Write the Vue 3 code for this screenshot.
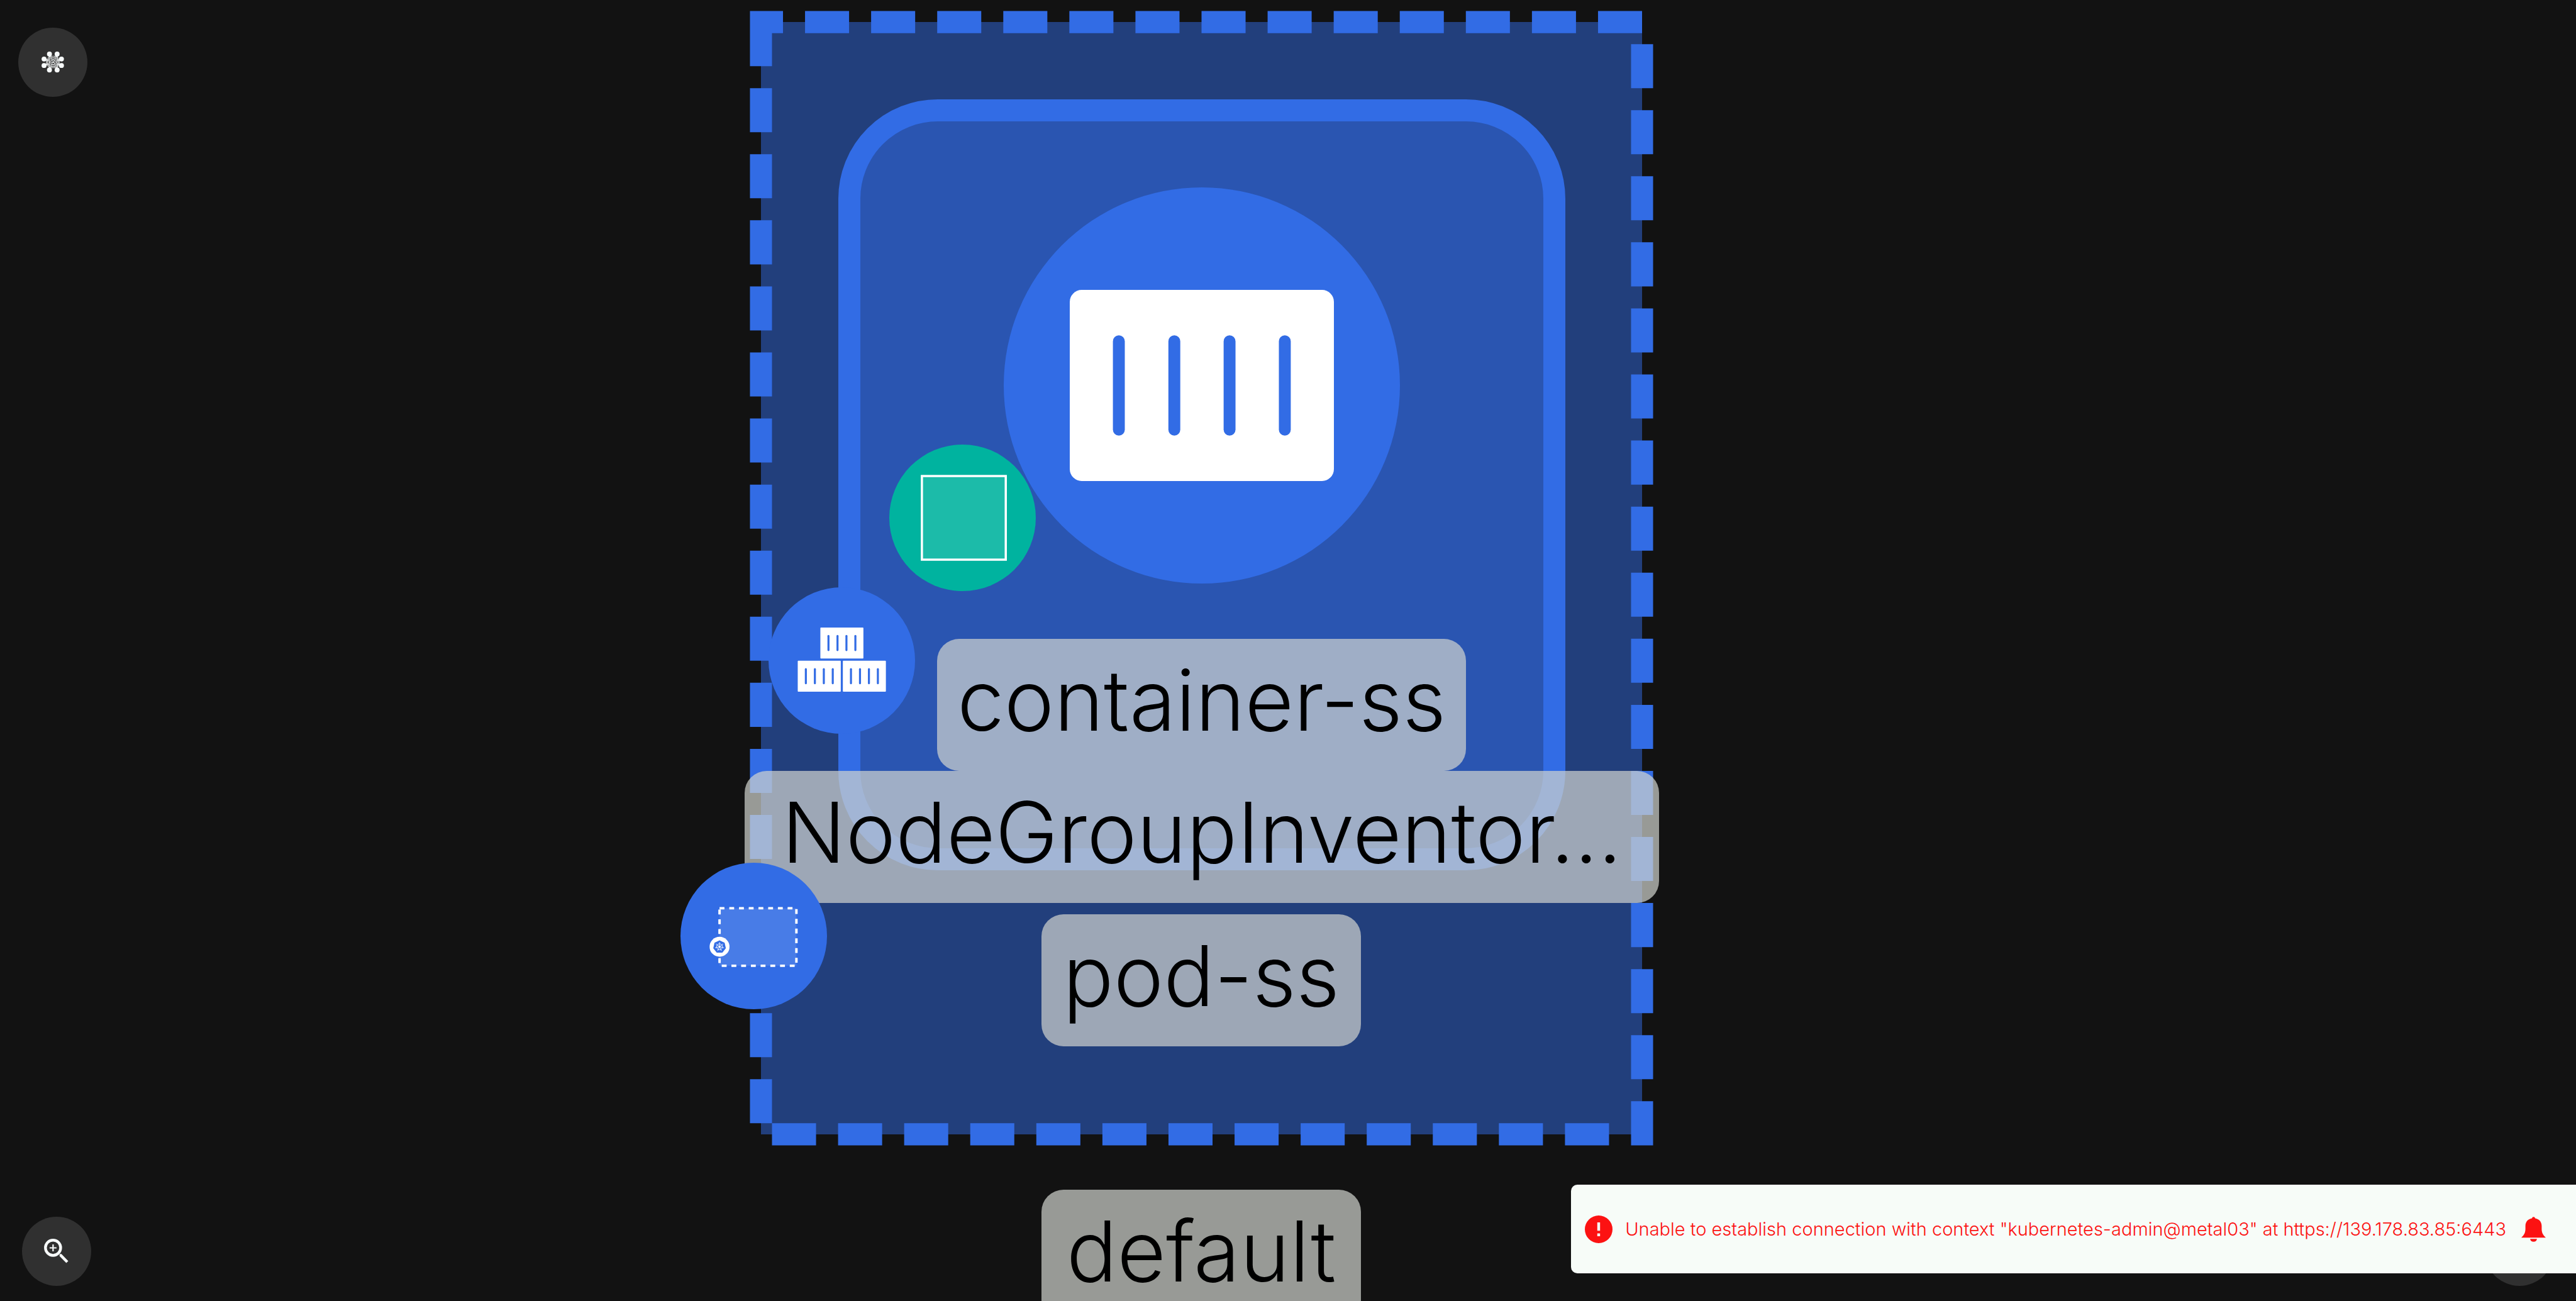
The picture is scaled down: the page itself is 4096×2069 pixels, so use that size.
<script setup>
const labels = [
  { id: 'container', text: 'container-ss' },
  { id: 'group', text: 'NodeGroupInventor...' },
  { id: 'pod', text: 'pod-ss' },
  { id: 'namespace', text: 'default' }
]

// Layout toggle icon: eight nodes around a fully linked mesh
const dots = [
  [67.7, 57.3], [84.3, 57.3], [93.7, 68], [93.7, 82],
  [84.3, 91.7], [67.7, 91.7], [56, 82], [56, 68]
]
const mesh = [
  [67.7, 61.8], [84.3, 61.8], [89, 70], [89, 80],
  [84.3, 87], [67.7, 87], [61, 80], [61, 70]
]
const links = mesh.flatMap((a, i) => mesh.slice(i + 1).map((b) => [...a, ...b]))

// Container glyphs stacked in the deployment badge
const boxes = [[112.5, 87.4], [63.4, 159.5], [161.3, 159.5]]
const slots = [15.4, 35, 54.4, 73.8]

// Helm wheel
const polar = (r, i) => {
  const a = (i * 2 * Math.PI) / 7 - Math.PI / 2
  return [(r * Math.cos(a)).toFixed(2), (r * Math.sin(a)).toFixed(2)]
}
const seven = [0, 1, 2, 3, 4, 5, 6]
const heptagon = seven.map((i) => polar(14, i).join(',')).join(' ')
const spokes = seven.map((i) => polar(10, i))
</script>

<template>
  <main class="page">
    <section class="canvas" aria-label="Cluster graph">
      <svg class="pod" viewBox="0 0 400 505" aria-hidden="true">
        <path class="pod-fill" d="M0 0V505H400V0Z" />
        <path class="pod-edge" d="M0 0V505H400V0Z" />
      </svg>
      <div class="container"></div>

      <svg class="container-icon" viewBox="0 0 180 180" aria-hidden="true">
        <circle class="blue" cx="90" cy="90" r="90" />
        <rect class="white" x="30" y="46.6" width="120" height="86.8" rx="5.4" />
        <rect v-for="x in [49.6, 74.8, 99.9, 125]" :key="x" class="blue" :x="x" y="67.2" width="5.4" height="45.6" rx="2.7" />
      </svg>

      <p v-for="l in labels" :key="l.id" class="label" :class="'label-' + l.id">{{ l.text }}</p>

      <svg class="badge badge-image" viewBox="0 0 318 318" aria-hidden="true">
        <circle class="teal" cx="159" cy="159" r="159" />
        <rect class="frame" x="70.8" y="68.3" width="182" height="181.5" />
      </svg>

      <svg class="badge badge-deployment" viewBox="0 0 318 318" aria-hidden="true">
        <circle class="blue" cx="159" cy="159" r="159" />
        <g v-for="b in boxes" :key="b.join()" :transform="`translate(${b[0]} ${b[1]})`">
          <rect class="white" width="93.4" height="67" rx="1.2" />
          <rect v-for="x in slots" :key="x" class="blue" :x="x" y="16" width="4.4" height="35" rx="2.2" />
        </g>
      </svg>

      <svg class="badge badge-pod" viewBox="0 0 318 318" aria-hidden="true">
        <circle class="blue" cx="159" cy="159" r="159" />
        <rect class="dashed" x="84.8" y="98.8" width="166.8" height="124.8" />
        <g transform="translate(84.8 182.4)">
          <circle class="white" r="21.6" />
          <polygon class="blue" :points="heptagon" />
          <circle class="wheel" r="6.4" />
          <line v-for="(s, i) in spokes" :key="i" class="wheel" x1="0" y1="0" :x2="s[0]" :y2="s[1]" />
          <circle class="white" r="1.8" />
        </g>
      </svg>
    </section>

    <header class="bar bar-top">
      <button class="fab" type="button" aria-label="Graph layout">
        <svg viewBox="0 0 150 150" aria-hidden="true">
          <line v-for="(l, i) in links" :key="i" class="link" :x1="l[0]" :y1="l[1]" :x2="l[2]" :y2="l[3]" />
          <circle v-for="(d, i) in dots" :key="i" class="ink" :cx="d[0]" :cy="d[1]" r="5.4" />
        </svg>
      </button>
    </header>

    <footer class="bar bar-bottom">
      <button class="fab" type="button" aria-label="Zoom in">
        <svg viewBox="0 0 150 150" aria-hidden="true">
          <circle class="lens" cx="67.3" cy="67.3" r="16.5" />
          <path class="ink" d="M65.8 60h3v6h6v3h-6v6h-3v-6h-6v-3h6zM81.5 83V81.5l1.5-.7h2.5L100.3 96l-4.3 4.3L81.5 85.5z" />
        </svg>
      </button>
      <button class="fab" type="button" aria-label="Notifications"></button>
    </footer>

    <aside class="toast" role="alert">
      <svg class="toast-error" viewBox="0 0 20 20" aria-hidden="true">
        <path d="M10 0a10 10 0 1 0 0 20a10 10 0 0 0 0-20zM11 15H9v-2h2zM11 11H9V5h2z" />
      </svg>
      <span class="toast-text">Unable to establish connection with context "kubernetes-admin@metal03" at https://139.178.83.85:6443</span>
      <button class="toast-bell" type="button" aria-label="Show notifications">
        <svg viewBox="0 0 160 162" aria-hidden="true">
          <circle cx="80" cy="10" r="10" />
          <path d="M0 135C20 118 27 100 27 78V58C27 28 50 8 80 8s53 20 53 50v20c0 22 7 40 27 57z" />
          <path d="M58 144h44a22 18 0 0 1-44 0z" />
        </svg>
      </button>
    </aside>
  </main>
</template>

<style>
body {
  background: #121212;
}
</style>

<style scoped>
.page {
  position: relative;
  height: 100vh;
  overflow: hidden;
  background: #121212;
  font-family: Inter, "Liberation Sans", sans-serif;
  font-weight: 300;
}

svg {
  display: block;
}

button {
  padding: 0;
  border: 0;
  background: none;
  cursor: pointer;
}

.canvas {
  position: absolute;
  inset: 0;
}

.pod {
  position: absolute;
  left: 1210px;
  top: 35px;
  width: 1401px;
  height: 1769px;
  overflow: visible;
}

.pod-fill {
  fill: rgba(50, 108, 229, 0.5);
}

.pod-edge {
  fill: none;
  stroke: #326ce5;
  stroke-width: 10;
  stroke-dasharray: 20 10;
}

.container {
  position: absolute;
  left: 1333px;
  top: 158px;
  box-sizing: border-box;
  width: 1156px;
  height: 1226px;
  border: 35px solid #326ce5;
  border-radius: 158px;
  background: rgba(50, 108, 229, 0.5);
}

.container-icon {
  position: absolute;
  left: 1596px;
  top: 298px;
  width: 630px;
  height: 630px;
}

.label {
  position: absolute;
  box-sizing: border-box;
  height: 210px;
  margin: 0;
  padding-bottom: 16px;
  border-radius: 35px;
  background: rgba(209, 212, 207, 0.7);
  color: #000;
  font-size: 134px;
  line-height: 194px;
  text-align: center;
  white-space: nowrap;
}

.label-container {
  left: 1490px;
  top: 1016px;
  width: 841px;
}

.label-group {
  left: 1184px;
  top: 1226px;
  width: 1454px;
}

.label-pod {
  left: 1656px;
  top: 1454px;
  width: 508px;
}

.label-namespace {
  left: 1656px;
  top: 1892px;
  width: 508px;
}

.badge {
  position: absolute;
  width: 233px;
  height: 233px;
}

.badge-image {
  left: 1414px;
  top: 707px;
}

.badge-deployment {
  left: 1222px;
  top: 934px;
}

.badge-pod {
  left: 1082px;
  top: 1372px;
}

.blue {
  fill: #326ce5;
}

.white {
  fill: #fff;
}

.teal {
  fill: #00b39f;
}

.frame {
  fill: rgba(255, 255, 255, 0.11);
  stroke: #fff;
  stroke-width: 4.8;
}

.dashed {
  fill: rgba(255, 255, 255, 0.11);
  stroke: #fff;
  stroke-width: 5.3;
  stroke-dasharray: 10.6 10.5;
}

.wheel {
  fill: none;
  stroke: #fff;
  stroke-width: 1.2;
}

.bar {
  position: absolute;
  left: 0;
  right: 0;
  display: flex;
  justify-content: space-between;
}

.bar-top {
  top: 0;
  padding: 44px 29px;
}

.bar-bottom {
  bottom: 0;
  padding: 24px 35px;
}

.fab {
  width: 110px;
  height: 110px;
  border-radius: 50%;
  background: #303030;
}

.ink {
  fill: #f7fafa;
}

.link {
  stroke: #f7fafa;
  stroke-width: 1;
}

.lens {
  fill: none;
  stroke: #f7fafa;
  stroke-width: 6;
}

.toast {
  position: absolute;
  right: 0;
  bottom: 44px;
  display: flex;
  align-items: center;
  box-sizing: border-box;
  height: 141px;
  padding: 0 48px 0 22px;
  border-radius: 10px 0 0 10px;
  background: #f7fcf8;
  color: #fc1212;
  fill: #fc1212;
}

.toast-error {
  width: 44px;
  height: 44px;
  margin-right: 20px;
}

.toast-text {
  font-size: 29px;
  line-height: 40px;
  white-space: nowrap;
}

.toast-bell {
  margin-left: 24px;
  fill: inherit;
}

.toast-bell svg {
  width: 39px;
  height: 40px;
}
</style>
